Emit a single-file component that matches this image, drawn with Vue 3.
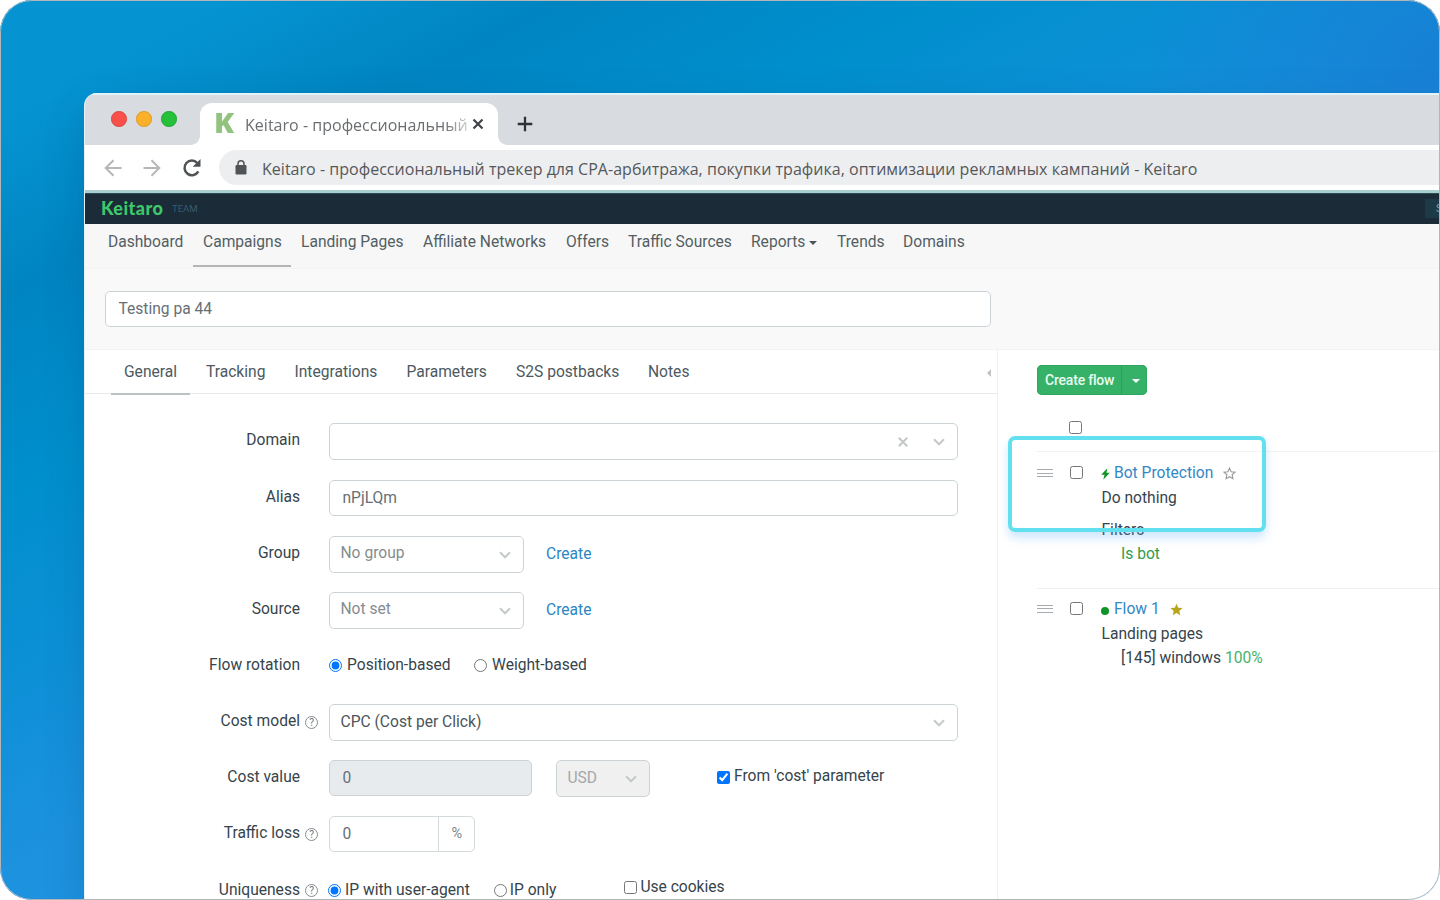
<script setup>
const nav = [
  { label: 'Dashboard', w: 95 },
  { label: 'Campaigns', w: 98, active: true },
  { label: 'Landing Pages', w: 122 },
  { label: 'Affiliate Networks', w: 143 },
  { label: 'Offers', w: 62 },
  { label: 'Traffic Sources', w: 123 },
  { label: 'Reports', w: 86, caret: true },
  { label: 'Trends', w: 66 },
  { label: 'Domains', w: 82 },
]
const tabs = [
  { label: 'General', w: 82, active: true },
  { label: 'Tracking', w: 88.5 },
  { label: 'Integrations', w: 112 },
  { label: 'Parameters', w: 109.5 },
  { label: 'S2S postbacks', w: 132 },
  { label: 'Notes', w: 72 },
]
</script>

<template>
  <div class="frame">
    <div class="window">
      <div class="tabstrip">
        <div class="lights"><i class="red"></i><i class="amber"></i><i class="green"></i></div>
        <div class="btab">
          <span class="fav"><b>K</b></span>
          <span class="btitle">Keitaro - профессиональный</span>
          <svg class="bclose" width="12" height="12" viewBox="0 0 12 12"><path d="M1.500 1.500l9 9M10.500 1.500l-9 9" stroke="#3f4347" stroke-width="2.200" fill="none" /></svg>
        </div>
        <svg class="plus" width="16" height="16" viewBox="0 0 16 16"><path d="M8 .7v14.600M.7 8h14.600" stroke="#2f3337" stroke-width="2.300" fill="none" /></svg>
      </div>
      <div class="toolbar">
        <svg class="back" width="18" height="18" viewBox="0 0 18 18" fill="none" stroke="#b5b7b9" stroke-width="2"><path d="M17.500 9H2M9.500 1.200L1.700 9l7.800 7.800" /></svg>
        <svg class="fwd" width="18" height="18" viewBox="0 0 18 18" fill="none" stroke="#b5b7b9" stroke-width="2"><path d="M.5 9H16M8.500 1.200L16.300 9l-7.800 7.800" /></svg>
        <svg class="reload" width="20" height="20" viewBox="0 0 20 20"><path d="M16.300 13.300A7.300 7.300 0 1 1 15.300 5" fill="none" stroke="#505356" stroke-width="2.500" /><path d="M18.500 1v7.800h-7.800z" fill="#505356" /></svg>
        <div class="omni">
          <svg class="lock" width="12" height="15" viewBox="0 0 12 15"><rect x=".5" y="5" width="11" height="9.500" rx="1.200" fill="#505457" /><path d="M3 6V3.800a3 3 0 0 1 6 0V6" fill="none" stroke="#505457" stroke-width="1.500" /></svg>
          <span>Keitaro - профессиональный трекер для CPA-арбитража, покупки трафика, оптимизации рекламных кампаний - Keitaro</span>
        </div>
      </div>
      <header class="brandbar">
        <b class="brand">Keitaro</b><span class="team">TEAM</span>
        <span class="search">S</span>
      </header>
      <nav class="nav">
        <a v-for="n in nav" :key="n.label" :class="{ active: n.active }" :style="{ width: n.w + 'px' }">{{ n.label }}<i v-if="n.caret" class="caret"></i></a>
      </nav>
      <div class="titlebar"><div class="field name">Testing pa 44</div></div>
      <div class="main">
        <section class="left">
          <div class="tabs">
            <a v-for="t in tabs" :key="t.label" :class="{ active: t.active }" :style="{ width: t.w + 'px' }">{{ t.label }}</a>
            <i class="collapse"></i>
          </div>
          <div class="form">
            <div class="row">
              <label>Domain</label><span class="help"></span>
              <div class="select wide">
                <svg class="clear" width="10" height="10" viewBox="0 0 10 10"><path d="M.8.8l8.400 8.400M9.200.8L.8 9.200" stroke="#c4c7c9" stroke-width="2" /></svg>
                <svg class="chev" width="12" height="8" viewBox="0 0 12 8"><path d="M1 1.300l5 5 5-5" /></svg>
              </div>
            </div>
            <div class="row">
              <label>Alias</label><span class="help"></span>
              <div class="field wide">nPjLQm</div>
            </div>
            <div class="row">
              <label>Group</label><span class="help"></span>
              <div class="select mid grey"><span>No group</span><svg class="chev" width="12" height="8" viewBox="0 0 12 8"><path d="M1 1.300l5 5 5-5" /></svg></div>
              <a class="link">Create</a>
            </div>
            <div class="row">
              <label>Source</label><span class="help"></span>
              <div class="select mid grey"><span>Not set</span><svg class="chev" width="12" height="8" viewBox="0 0 12 8"><path d="M1 1.300l5 5 5-5" /></svg></div>
              <a class="link">Create</a>
            </div>
            <div class="row">
              <label>Flow rotation</label><span class="help"></span>
              <div class="opt first"><input type="radio" name="rot" checked /><span>Position-based</span></div>
              <div class="opt"><input type="radio" name="rot" /><span>Weight-based</span></div>
            </div>
            <div class="row">
              <label>Cost model</label><span class="help"><i>?</i></span>
              <div class="select wide"><span>CPC (Cost per Click)</span><svg class="chev" width="12" height="8" viewBox="0 0 12 8"><path d="M1 1.300l5 5 5-5" /></svg></div>
            </div>
            <div class="row">
              <label>Cost value</label><span class="help"></span>
              <div class="field cost">0</div>
              <div class="select usd"><span>USD</span><svg class="chev" width="12" height="8" viewBox="0 0 12 8"><path d="M1 1.300l5 5 5-5" /></svg></div>
              <div class="opt from"><input type="checkbox" checked /><span>From 'cost' parameter</span></div>
            </div>
            <div class="row">
              <label>Traffic loss</label><span class="help"><i>?</i></span>
              <div class="group"><div class="loss">0</div><div class="pct">%</div></div>
            </div>
            <div class="row uniq">
              <label>Uniqueness</label><span class="help"><i>?</i></span>
              <div class="opt first"><input type="radio" name="uq" checked /><span>IP with user-agent</span></div>
              <div class="opt ip"><input type="radio" name="uq" /><span>IP only</span></div>
              <div class="opt cookies"><input type="checkbox" /><span>Use cookies</span></div>
            </div>
          </div>
        </section>
        <section class="right">
          <div class="btn"><span>Create flow</span><em><i class="caret light"></i></em></div>
          <div class="all"><input type="checkbox" /></div>
          <div class="flow one">
            <i class="grip"></i><input type="checkbox" />
            <div class="body">
              <p class="head"><svg class="mark" width="9" height="12" viewBox="0 0 9 12"><path d="M6.300.3L.2 6.800h3.300L2.300 11.700 8.800 4.800H5.500z" fill="#0f9427" /></svg><a class="bot">Bot Protection</a><svg class="star" width="13" height="13" viewBox="0 0 13 13"><path d="M6.500 1.200l1.600 3.600 3.900.4-2.900 2.600.8 3.900-3.400-2-3.400 2 .8-3.900L1 5.200l3.900-.4z" fill="none" stroke="#95999c" stroke-width="1.100" /></svg></p>
              <p>Do nothing</p>
              <p class="filters">Filters</p>
              <p class="sub isbot">Is bot</p>
            </div>
          </div>
          <div class="flow two">
            <i class="grip"></i><input type="checkbox" />
            <div class="body">
              <p class="head"><i class="dot"></i><a>Flow 1</a><svg class="star" width="13" height="13" viewBox="0 0 13 13"><path d="M6.500.7l1.700 4 4.300.4-3.200 2.900.9 4.300-3.700-2.200-3.700 2.200.9-4.300L.5 5.100l4.300-.4z" fill="#b9a51c" /></svg></p>
              <p>Landing pages</p>
              <p class="sub">[145] windows <span class="full">100%</span></p>
            </div>
          </div>
          <div class="highlight"></div>
        </section>
      </div>
    </div>
  </div>
</template>

<style>
body { margin: 0; background: #fff; }
</style>

<style scoped>
* { box-sizing: border-box; }
.frame { position: relative; width: 1440px; height: 900px; overflow: hidden; border-radius: 32px; padding: 93px 0 0 84px; font-family: Roboto, "Liberation Sans", sans-serif; font-size: 15.600px; color: #36444b;
  background: radial-gradient(ellipse 300px 200px at 1440px 60px, rgba(22,124,210,.8) 0%, rgba(22,124,210,0) 100%), linear-gradient(152deg, #0593d2 0, #0593d2 110px, #0085c1 260px, #0087c5 310px, #008fcd 440px, #0e90d7 620px, #1d92df 770px); }
.frame::after { content: ""; position: absolute; inset: 0; border: 1px solid #b2b6b9; border-radius: 32px; z-index: 5; }
.window { display: flex; flex-direction: column; height: 807px; background: #fff; border-radius: 13px 0 0 0; overflow: hidden; border-left: 1px solid #e4f1f7; box-shadow: 0 14px 40px rgba(0,60,110,.2); }
.tabstrip { display: flex; height: 52px; background: #d8dbe0; border-top: 2px solid #e2f3f8; flex: none; }
.lights { display: flex; gap: 9.500px; padding: 16px 0 0 26px; width: 115px; }
.lights i { width: 15.500px; height: 15.500px; border-radius: 50%; flex: none; }
.red { background: #f9504b; border: 1px solid #e0443f; } .amber { background: #fbb02a; border: 1px solid #df9a24; } .green { background: #26c03a; border: 1px solid #1fa934; }
.btab { position: relative; display: flex; width: 298px; margin-top: 8px; height: 42px; background: #fff; border-radius: 12px 12px 0 0; padding-left: 15px; }
.btab::before, .btab::after { content: ""; position: absolute; bottom: 0; width: 9px; height: 9px; }
.btab::before { left: -9px; background: radial-gradient(circle at 0 0, transparent 8.500px, #fff 9px); }
.btab::after { right: -9px; background: radial-gradient(circle at 100% 0, transparent 8.500px, #fff 9px); }
.fav { width: 30px; font: 700 28px/39px "Open Sans", sans-serif; color: #93c47f; }
.fav b { display: inline-block; transform: scaleX(1.050); transform-origin: 0 50%; margin-left: -1px; }
.btitle { width: 223px; font: 16px/44px "Open Sans", "Noto Sans", sans-serif; letter-spacing: .02px; color: #6b6e71; white-space: nowrap; overflow: hidden; -webkit-mask-image: linear-gradient(90deg, #000 200px, rgba(0,0,0,.3) 223px); mask-image: linear-gradient(90deg, #000 200px, rgba(0,0,0,.3) 223px); }
.bclose { margin: 15px 0 0 4px; }
.plus { margin: 21px 0 0 19px; }
.toolbar { display: flex; height: 45px; flex: none; align-items: center; background: #fff; padding-left: 19px; }
.fwd { margin-left: 21px; } .reload { margin-left: 21px; }
.omni { display: flex; align-items: center; flex: 1; height: 35px; margin-left: 17px; border-radius: 18px 0 0 18px; background: #edeef0; padding-left: 16px; }
.omni span { font: 16px/36px "Open Sans", "Noto Sans", sans-serif; color: #55585b; margin: 2px 0 0 15px; letter-spacing: .025px; white-space: nowrap; }
.brandbar { display: flex; align-items: center; height: 34px; flex: none; background: #1b2b37; border-top: 3px solid #a9cfd0; padding-left: 16px; box-shadow: inset 0 1px #2d4d54; }
.brand { font: 900 18px/28px Lato, sans-serif; letter-spacing: .45px; color: #3fc76c; width: 71px; margin-top: -2px; }
.team { font-size: 9.500px; color: #355d74; flex: 1; }
.search { width: 15px; height: 19px; background: #1d3b46; color: #8aa1aa; font-size: 11px; line-height: 20px; padding-left: 11px; overflow: hidden; }
.nav { display: flex; height: 45px; flex: none; background: #f7f7f7; border-bottom: 1px solid #f3f3f3; padding-left: 13px; color: #535e63; }
.nav a { height: 43px; line-height: 37px; padding-left: 10px; white-space: nowrap; flex: none; }
.nav .active { border-bottom: 2px solid #b3b5b7; }
.caret { display: inline-block; border: 4px solid transparent; border-top-color: #4a555a; border-bottom: 0; margin: 0 0 2px 4px; }
.titlebar { height: 81px; flex: none; background: #f9f9f9; border-bottom: 1px solid #f2f3f3; padding: 22px 0 0 20px; }
.field { height: 36px; border: 1px solid #ccd3d6; border-radius: 5px; background: #fff; color: #667075; line-height: 34px; padding-left: 12.500px; }
.name { width: 886px; }
.main { display: flex; flex: 1; min-height: 0; }
.left { width: 913px; border-right: 1px solid #edf0f1; }
.tabs { display: flex; height: 44px; border-bottom: 1px solid #e6eaeb; padding-left: 25px; color: #4d595f; }
.tabs a { line-height: 45px; height: 44px; padding-left: 14px; white-space: nowrap; flex: none; position: relative; }
.tabs .active::after { content: ""; position: absolute; left: 1px; bottom: -1px; width: 79px; height: 2px; background: #bcc1c4; }
.collapse { margin: 19px 0 0 auto; width: 0; height: 0; border: 4.500px solid transparent; border-right-color: #bfc3c5; border-left: 0; margin-right: 6px; }
.form { padding: 29.400px 0 0 0; }
.row { display: flex; height: 56.160px; }
label { width: 215px; text-align: right; line-height: 34.500px; white-space: nowrap; flex: none; }
.help { width: 29px; flex: none; padding: 11.500px 0 0 5px; }
.help i { display: block; width: 13px; height: 13px; border: 1px solid #858c90; border-radius: 50%; font: 10px/11px Roboto, sans-serif; text-align: center; color: #6b7377; }
.select { display: flex; align-items: center; height: 37px; border: 1px solid #ccd3d6; border-radius: 5px; padding: 0 12px 1px 10.500px; color: #4c555a; background: #fff; flex: none; }
.select span { flex: 1; margin-top: -1px; }
.chev { margin-left: auto; margin-top: 2px; fill: none; stroke: #c6c9cb; stroke-width: 2; }
.clear { margin-left: auto; margin-top: 1px; } .clear + .chev { margin-left: 25px; }
.wide { width: 629px; } .mid { width: 195px; } .grey { color: #868c8f; }
.link { color: #2c86c3; line-height: 36px; margin-left: 22px; }
.opt { display: flex; align-items: center; height: 33px; white-space: nowrap; margin-left: 23.500px; }
.opt input { margin: 2px 5px 0 0; width: 13px; height: 13px; }
.opt.first { margin-left: 0; }
.cost { width: 203px; background: #e7ebee; }
.usd { width: 93.500px; margin-left: 24px; background: #f0f0f0; color: #a4a7a9; }
.from { margin-left: 67.500px !important; height: 32px; } .from input { margin-right: 4px; margin-top: 2px; }
.group { display: flex; width: 146px; height: 36px; border: 1px solid #d3dadc; border-radius: 5px; line-height: 34px; }
.loss { width: 109px; padding-left: 12.500px; border-right: 1px solid #d3dadc; color: #667075; }
.pct { font-size: 14.500px; padding-left: 12.500px; color: #7c8589; line-height: 33px; }
.uniq .opt input { margin-right: 4px; } .uniq .first { margin-left: -1px; }
.uniq .opt { height: 34.500px; }
.ip { margin-left: 24px; } .ip input { margin-right: 3px !important; }
.uniq .cookies { height: 28px; margin-left: 68px; } .cookies input { margin-right: 3px !important; }
.right { position: relative; flex: 1; padding: 15px 0 0 39px; }
.btn { display: flex; width: 110px; height: 30px; background: #35b267; border-radius: 5px; color: #fff; font-size: 14px; letter-spacing: -.2px; font-weight: 500; line-height: 30px; box-shadow: inset 0 0 0 1px #2fa65d; }
.btn span { width: 85px; padding-left: 8px; border-right: 1px solid #2b9f58; color: #e9fbf0; }
.btn em { flex: 1; display: flex; align-items: center; justify-content: center; }
.caret.light { border-top-color: #fff; margin: 1px 0 0 2px; border-width: 4px 4px 0; }
.all { height: 57px; padding: 26px 0 0 31.500px; border-bottom: 1px solid #f1f3f3; }
.all input, .flow input { display: block; margin: 0; width: 13px; height: 13px; flex: none; }
.flow { display: flex; }
.one { height: 136.500px; border-bottom: 1px solid #eff1f2; }
.flow input { margin: 14px 19px 0 16.500px; }
.grip { width: 16px; height: 8px; margin-top: 17px; border-top: 1px solid #a6abae; border-bottom: 1px solid #a6abae; background: linear-gradient(#a6abae, #a6abae) 0 50% / 100% 1px no-repeat; flex: none; }
.body { padding-top: 9px; white-space: nowrap; }
.body p { margin: 0; height: 24.500px; line-height: 25px; }
.head { display: flex; align-items: center; }
.head a { color: #3388c4; }
.mark { margin: 2px 4px 0 -.5px; } .dot { width: 8px; height: 8px; background: #0f9427; border-radius: 50%; margin: 3px 5px 0 -.5px; }
.star { margin-left: 10px; }
.filters { padding-top: 7.500px; height: 32px !important; }
.sub { padding-left: 19.500px; } .isbot { color: #309c4c; } .full { color: #45b36d; }
.two .body { padding-top: 8.500px; } .two input { margin-top: 13.500px; } .two .grip { margin-top: 16px; }
.highlight { position: absolute; left: 10px; top: 86px; width: 257.500px; height: 96px; border: 4px solid #62e0f0; border-radius: 7px; box-shadow: 0 6px 10px rgba(80,170,255,.28); }
</style>
